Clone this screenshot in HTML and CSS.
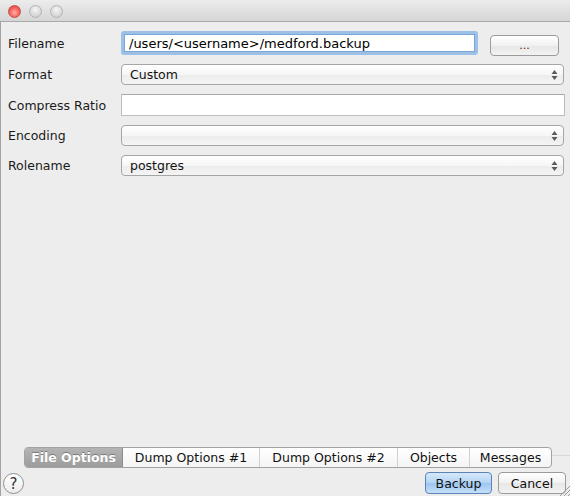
FILE: index.html
```html
<!DOCTYPE html>
<html>
<head>
<meta charset="utf-8">
<link rel="stylesheet" href="styles.css">
</head>
<body>
<div class="window">
  <div class="titlebar">
    <span class="light red"></span>
    <span class="light"></span>
    <span class="light"></span>
  </div>
  <div class="content">
    <div class="form">
      <div class="row r24">
        <label class="lbl">Filename</label>
        <div class="focus-field"><span class="input-text">/users/&lt;username&gt;/medford.backup</span></div>
        <button class="btn browse">...</button>
      </div>
      <div class="row r21">
        <label class="lbl">Format</label>
        <div class="select"><span>Custom</span><svg class="arrows" width="7" height="12" viewBox="0 0 7 12"><path d="M3.5 1 L6.5 5 L0.5 5 Z M3.5 11 L6.5 7 L0.5 7 Z" fill="#5a5a5a"/></svg></div>
      </div>
      <div class="row r22">
        <label class="lbl">Compress Ratio</label>
        <div class="plain-input"></div>
      </div>
      <div class="row r21">
        <label class="lbl">Encoding</label>
        <div class="select"><span></span><svg class="arrows" width="7" height="12" viewBox="0 0 7 12"><path d="M3.5 1 L6.5 5 L0.5 5 Z M3.5 11 L6.5 7 L0.5 7 Z" fill="#5a5a5a"/></svg></div>
      </div>
      <div class="row r21">
        <label class="lbl">Rolename</label>
        <div class="select"><span>postgres</span><svg class="arrows" width="7" height="12" viewBox="0 0 7 12"><path d="M3.5 1 L6.5 5 L0.5 5 Z M3.5 11 L6.5 7 L0.5 7 Z" fill="#5a5a5a"/></svg></div>
      </div>
    </div>
    <div class="spacer"></div>
    <div class="tabrow">
      <div class="tabs">
        <div class="tab active w1">File Options</div>
        <div class="tab w2">Dump Options #1</div>
        <div class="tab w3">Dump Options #2</div>
        <div class="tab w4">Objects</div>
        <div class="tab w5">Messages</div>
      </div>
      <div class="tabline"></div>
    </div>
    <div class="footer">
      <div class="help">?</div>
      <div class="footer-spacer"></div>
      <button class="btn primary">Backup</button>
      <button class="btn cancel">Cancel</button>
    </div>
    <svg class="grip" width="11" height="11" viewBox="0 0 11 11">
      <path d="M1 11 L11 1 M5 11 L11 5 M9 11 L11 9" stroke="#9a9a9a" stroke-width="1"/>
    </svg>
  </div>
</div>
</body>
</html>
```

FILE: styles.css
```css
html, body {
  margin: 0;
  padding: 0;
}
body {
  width: 570px;
  height: 496px;
  overflow: hidden;
  background: #ededed;
  font-family: "DejaVu Sans", "Liberation Sans", sans-serif;
  font-size: 12.5px;
  color: #111;
}
.window {
  width: 570px;
  height: 496px;
  display: flex;
  flex-direction: column;
}
.titlebar {
  height: 21px;
  flex: 0 0 21px;
  background: linear-gradient(#ececec, #d6d6d6);
  border-bottom: 1px solid #a9a9a9;
  display: flex;
  align-items: center;
  padding-left: 8px;
  gap: 8px;
}
.light {
  width: 13px;
  height: 13px;
  border-radius: 50%;
  box-sizing: border-box;
  border: 1px solid #b4b4b4;
  background: radial-gradient(circle at 50% 35%, #f6f6f6, #d4d4d4 70%, #c8c8c8);
  margin-top: 1px;
}
.light.red {
  border-color: #c94a44;
  background: radial-gradient(circle at 50% 60%, #ffb0a8, #f2615a 55%, #d64840);
}
.content {
  position: relative;
  flex: 1;
  display: flex;
  flex-direction: column;
  border-left: 1px solid #a2a2a2;
  background: #ededed;
}
.form {
  display: flex;
  flex-direction: column;
  gap: 9px;
  padding: 9px 6px 0 7px;
}
.row {
  display: flex;
  align-items: center;
}
.r24 { height: 24px; }
.r21 { height: 21px; }
.r22 { height: 22px; }
.lbl {
  flex: 0 0 113px;
  font-size: 12.5px;
  color: #1a1a1a;
}
.focus-field {
  flex: 0 0 357px;
  height: 24px;
  box-sizing: border-box;
  border: 3px solid #9cc0e6;
  border-radius: 3px;
  background: #fff;
  box-shadow: inset 0 0 0 1px #7aa5d8;
  display: flex;
  align-items: center;
  padding-left: 5px;
}
.input-text {
  font-size: 13px;
  color: #000;
}
.btn {
  font-family: "DejaVu Sans", "Liberation Sans", sans-serif;
  font-size: 12.5px;
  color: #111;
  box-sizing: border-box;
  border: 1px solid #9b9b9b;
  border-radius: 4px;
  background: linear-gradient(#ffffff, #f1f1f1 50%, #e6e6e6 51%, #f3f3f3);
  padding: 0;
  height: 21px;
}
.browse {
  width: 69px;
  margin-left: 12px;
  margin-top: 4px;
  color: #5a2a1a;
  font-size: 11px;
}
.select {
  flex: 1;
  height: 21px;
  box-sizing: border-box;
  border: 1px solid #a6a6a6;
  border-radius: 4px;
  background: linear-gradient(#ffffff, #f6f6f6 50%, #ececec 51%, #f4f4f4);
  display: flex;
  align-items: center;
  padding: 0 5px 0 8px;
}
.select span {
  flex: 1;
  font-size: 12.5px;
  color: #111;
}
.arrows {
  display: block;
}
.plain-input {
  flex: 1;
  height: 22px;
  box-sizing: border-box;
  border: 1px solid #bdbdbd;
  border-top-color: #a9a9a9;
  background: #fff;
  margin-right: -1px;
}
.spacer {
  flex: 1;
}
.tabrow {
  display: flex;
  align-items: flex-start;
  padding-left: 23px;
  height: 21px;
}
.tabs {
  display: flex;
  height: 21px;
  box-sizing: border-box;
  border: 1px solid #a2a2a2;
  border-radius: 4px;
  overflow: hidden;
  background: linear-gradient(#ffffff, #f4f4f4);
}
.tab {
  display: flex;
  align-items: center;
  justify-content: center;
  font-size: 12.5px;
  color: #111;
  box-sizing: border-box;
  border-left: 1px solid #d0d0d0;
}
.tab.active {
  border-left: none;
  background: linear-gradient(#b4b4b4, #9c9c9c);
  color: #fff;
  font-weight: bold;
  text-shadow: 0 -1px 0 #7a7a7a;
  border-right: 1px solid #8c8c8c;
}
.tab.active + .tab { border-left: none; }
.w1 { width: 98px; }
.w2 { width: 136px; }
.w3 { width: 138px; }
.w4 { width: 72px; }
.w5 { width: 82px; }
.tabline {
  flex: 1;
  height: 1px;
  margin-top: 8px;
  background: #d8d8d8;
}
.footer {
  display: flex;
  align-items: flex-start;
  height: 28px;
  padding: 4px 4px 0 2px;
  box-sizing: border-box;
}
.help {
  width: 21px;
  height: 21px;
  margin-top: 1px;
  box-sizing: border-box;
  border: 1px solid #8e8e8e;
  border-radius: 50%;
  background: linear-gradient(#ffffff, #ececec);
  display: flex;
  align-items: center;
  justify-content: center;
  font-size: 15px;
  color: #333;
}
.footer-spacer {
  flex: 1;
}
.primary {
  width: 67px;
  height: 22px;
  border-color: #5c82b8;
  background: linear-gradient(#d6e8fa, #b3d4f4 50%, #9cc5ef 51%, #c4e0fb);
}
.cancel {
  width: 68px;
  height: 22px;
  margin-left: 6px;
}
.grip {
  position: absolute;
  right: 0;
  bottom: 0;
}
```
